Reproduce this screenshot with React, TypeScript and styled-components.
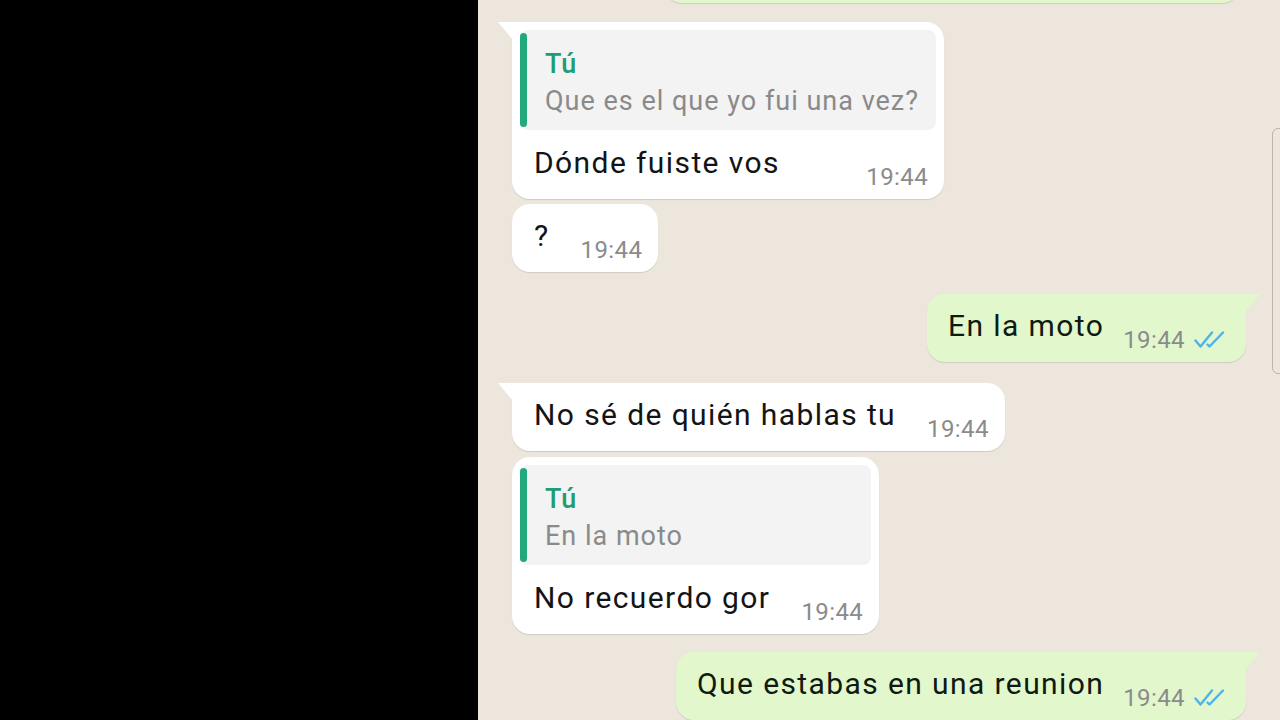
import React from "react";
import styled, { createGlobalStyle, css } from "styled-components";

const GlobalStyle = createGlobalStyle`
  html, body { margin: 0; padding: 0; background: #000; overflow: hidden; }
  * { box-sizing: border-box; }
`;

const Page = styled.div`
  display: flex;
  width: 1280px;
  height: 720px;
  overflow: hidden;
  font-family: Roboto, "Noto Sans", "Liberation Sans", sans-serif;
`;

const LeftPanel = styled.div`
  width: 478px;
  flex: none;
  background: #000;
`;

const Chat = styled.div`
  position: relative;
  flex: 1;
  background: #ece6dd;
  display: flex;
  flex-direction: column;
  padding: 0 34px;
  overflow: hidden;
`;

const EdgeOutline = styled.div`
  position: absolute;
  right: -12px;
  top: 128px;
  width: 20px;
  height: 246px;
  border: 1.5px solid #bcb5ac;
  border-radius: 6px;
`;

const Row = styled.div<{ $out?: boolean; $gap: number }>`
  display: flex;
  justify-content: ${(p) => (p.$out ? "flex-end" : "flex-start")};
  margin-top: ${(p) => p.$gap}px;
  flex: none;
`;

const Bubble = styled.div<{ $out?: boolean; $tail?: boolean; $quoted?: boolean }>`
  position: relative;
  display: flex;
  flex-direction: column;
  background: ${(p) => (p.$out ? "#e2f7cc" : "#ffffff")};
  border-radius: 18px;
  box-shadow: 0 1px 1px rgba(0, 0, 0, 0.12);
  padding: ${(p) => (p.$quoted ? "8px 8px 10px 8px" : "14px 0 10px 0")};
  ${(p) =>
    p.$tail &&
    (p.$out
      ? css`
          border-top-right-radius: 0;
          &::before {
            content: "";
            position: absolute;
            top: 0;
            right: -14px;
            width: 15px;
            height: 18px;
            background: #e2f7cc;
            clip-path: polygon(0 0, 100% 0, 0 100%);
          }
        `
      : css`
          border-top-left-radius: 0;
          &::before {
            content: "";
            position: absolute;
            top: 0;
            left: -14px;
            width: 15px;
            height: 18px;
            background: #ffffff;
            clip-path: polygon(0 0, 100% 0, 100% 100%);
          }
        `)}
`;

const Partial = styled(Bubble)`
  width: 576px;
  height: 68px;
  margin-right: 6px;
`;

const Quote = styled.div`
  display: flex;
  background: #f3f3f3;
  border-radius: 8px;
  height: 100px;
`;

const QuoteBar = styled.div`
  width: 7px;
  flex: none;
  background: #22a97b;
  border-radius: 4px;
  margin: 3px 0;
`;

const QuoteBody = styled.div`
  display: flex;
  flex-direction: column;
  padding: 17px 17px 0 18px;
`;

const QuoteAuthor = styled.div`
  color: #229c72;
  font-size: 27px;
  font-weight: 500;
  letter-spacing: 1px;
  line-height: 34px;
`;

const QuoteText = styled.div`
  color: #8a8a8a;
  font-size: 27px;
  letter-spacing: 1px;
  line-height: 40px;
  white-space: nowrap;
`;

const Line = styled.div<{ $out?: boolean; $quoted?: boolean }>`
  display: flex;
  align-items: flex-start;
  padding: ${(p) =>
    p.$quoted ? "15px 8px 0 14px" : p.$out ? "0 18px 0 21px" : "0 16px 0 22px"};
`;

const Text = styled.span<{ $out?: boolean }>`
  flex: 1;
  font-size: 30px;
  letter-spacing: 1.4px;
  line-height: 36px;
  color: ${(p) => (p.$out ? "#0f1a10" : "#141414")};
  white-space: nowrap;
`;

const Meta = styled.span<{ $out?: boolean }>`
  display: flex;
  align-items: center;
  gap: 9px;
  margin-top: 20px;
  margin-left: ${(p) => (p.$out ? 19 : 31)}px;
  font-size: 24px;
  letter-spacing: 0.4px;
  line-height: 24px;
  color: #8b8b8b;
  white-space: nowrap;
`;

const Ticks = () => (
  <svg width="34" height="18" viewBox="0 0 34 18" fill="none">
    <path d="M1.5 9.5 L6.5 15.5 L18 1.5" stroke="#4fb3e8" strokeWidth="2.4" strokeLinecap="round" strokeLinejoin="round" />
    <path d="M13.5 13.5 L15.5 15.5 L29 1.5" stroke="#4fb3e8" strokeWidth="2.4" strokeLinecap="round" strokeLinejoin="round" />
  </svg>
);

type Msg = {
  out?: boolean;
  tail?: boolean;
  gap: number;
  text: string;
  quote?: string;
};

const messages: Msg[] = [
  { gap: 19, tail: true, text: "Dónde fuiste vos", quote: "Que es el que yo fui una vez?" },
  { gap: 5, text: "?" },
  { gap: 22, out: true, tail: true, text: "En la moto" },
  { gap: 21, tail: true, text: "No sé de quién hablas tu" },
  { gap: 6, text: "No recuerdo gor", quote: "En la moto" },
  { gap: 18, out: true, tail: true, text: "Que estabas en una reunion" },
];

export default function App() {
  return (
    <>
      <GlobalStyle />
      <Page>
        <LeftPanel />
        <Chat>
          <Row $out $gap={-65}>
            <Partial $out />
          </Row>
          {messages.map((m, i) => (
            <Row key={i} $out={m.out} $gap={m.gap}>
              <Bubble $out={m.out} $tail={m.tail} $quoted={!!m.quote}>
                {m.quote && (
                  <Quote>
                    <QuoteBar />
                    <QuoteBody>
                      <QuoteAuthor>Tú</QuoteAuthor>
                      <QuoteText>{m.quote}</QuoteText>
                    </QuoteBody>
                  </Quote>
                )}
                <Line $out={m.out} $quoted={!!m.quote}>
                  <Text $out={m.out}>{m.text}</Text>
                  <Meta $out={m.out}>
                    19:44
                    {m.out && <Ticks />}
                  </Meta>
                </Line>
              </Bubble>
            </Row>
          ))}
          <EdgeOutline />
        </Chat>
      </Page>
    </>
  );
}
